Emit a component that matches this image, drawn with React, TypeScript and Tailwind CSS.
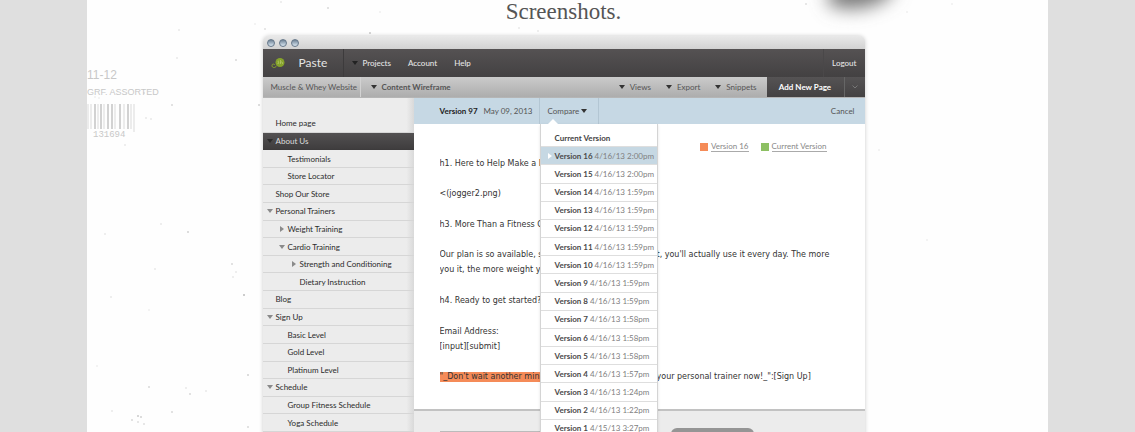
import clsx from "clsx";
import { ReactNode } from "react";

type Caret = "down" | "right";

type NavPage = {
  name: string;
  level: 0 | 1 | 2;
  caret?: Caret;
  active?: boolean;
};

const pages: NavPage[] = [
  { name: "Home page", level: 0 },
  { name: "About Us", level: 0, caret: "down", active: true },
  { name: "Testimonials", level: 1 },
  { name: "Store Locator", level: 1 },
  { name: "Shop Our Store", level: 0 },
  { name: "Personal Trainers", level: 0, caret: "down" },
  { name: "Weight Training", level: 1, caret: "right" },
  { name: "Cardio Training", level: 1, caret: "down" },
  { name: "Strength and Conditioning", level: 2, caret: "right" },
  { name: "Dietary Instruction", level: 2 },
  { name: "Blog", level: 0 },
  { name: "Sign Up", level: 0, caret: "down" },
  { name: "Basic Level", level: 1 },
  { name: "Gold Level", level: 1 },
  { name: "Platinum Level", level: 1 },
  { name: "Schedule", level: 0, caret: "down" },
  { name: "Group Fitness Schedule", level: 1 },
  { name: "Yoga Schedule", level: 1 },
];

const versions = [
  { id: 16, date: "4/16/13 2:00pm" },
  { id: 15, date: "4/16/13 2:00pm" },
  { id: 14, date: "4/16/13 1:59pm" },
  { id: 13, date: "4/16/13 1:59pm" },
  { id: 12, date: "4/16/13 1:59pm" },
  { id: 11, date: "4/16/13 1:59pm" },
  { id: 10, date: "4/16/13 1:59pm" },
  { id: 9, date: "4/16/13 1:59pm" },
  { id: 8, date: "4/16/13 1:59pm" },
  { id: 7, date: "4/16/13 1:58pm" },
  { id: 6, date: "4/16/13 1:58pm" },
  { id: 5, date: "4/16/13 1:58pm" },
  { id: 4, date: "4/16/13 1:57pm" },
  { id: 3, date: "4/16/13 1:24pm" },
  { id: 2, date: "4/16/13 1:22pm" },
  { id: 1, date: "4/15/13 3:27pm" },
];

// each line is split where the version menu hangs over it
const lines: { start: string; end?: string; changed?: boolean }[] = [
  { start: "h1. Here to Help Make a D" },
  { start: "" },
  { start: "<(jogger2.png)" },
  { start: "" },
  { start: "h3. More Than a Fitness C" },
  { start: "" },
  {
    start: "Our plan is so available, s",
    end: "t, you'll actually use it every day. The more",
  },
  { start: "you it, the more weight yo" },
  { start: "" },
  { start: "h4. Ready to get started?" },
  { start: "" },
  { start: "Email Address:" },
  { start: "[input][submit]" },
  { start: "" },
  {
    start: '"_Don\'t wait another minute',
    end: 'your personal trainer now!_":[Sign Up]',
    changed: true,
  },
];

// x, y, opacity
const specks: [number, number, number][] = [
  [194, 2, 0.3], [241, 8, 0.5], [293, 12, 0.2], [178, 29, 0.4], [283, 33, 0.7],
  [168, 24, 0.2], [92, 30, 0.3], [149, 60, 0.5], [90, 58, 0.3], [57, 93, 0.4],
  [85, 105, 0.5], [8, 97, 0.2], [12, 98, 0.2], [39, 94, 0.2], [172, 105, 0.6],
  [177, 135, 0.4], [38, 145, 0.3], [59, 118, 0.3], [64, 119, 0.3], [101, 232, 0.6],
  [74, 224, 0.3], [68, 269, 0.3], [145, 264, 0.5], [149, 272, 0.3], [146, 277, 0.3],
  [157, 295, 0.9], [24, 297, 0.3], [62, 310, 0.2], [161, 375, 0.6], [62, 387, 0.5],
  [99, 388, 0.3], [103, 394, 0.5], [119, 391, 0.3], [85, 412, 0.5], [51, 416, 0.7],
  [54, 417, 0.6], [45, 420, 0.5], [57, 424, 0.4], [51, 422, 0.4], [161, 427, 0.5],
  [25, 411, 0.3], [10, 366, 0.2], [18, 234, 0.3], [820, 12, 0.2], [719, 4, 0.4],
  [865, 4, 0.2], [792, 150, 0.2], [840, 240, 0.2], [451, 31, 0.3], [432, 28, 0.3],
];

function Triangle({ caret, className }: { caret: Caret; className?: string }) {
  return (
    <svg viewBox="0 0 6 6" className={clsx("size-1.5 shrink-0", className)}>
      <path
        d={caret === "down" ? "M0 1h6L3 5z" : "M1 0v6l4-3z"}
        fill="currentColor"
      />
    </svg>
  );
}

function Logo() {
  return (
    <svg viewBox="0 0 28 22" className="h-[11px] w-3.5">
      <circle cx="18" cy="9" r="9" fill="#86a32b" />
      <path
        d="M11 16C8 21 2 20 2 15C2 12 5 11 7 13"
        fill="none"
        stroke="#86a32b"
        strokeWidth="2"
        strokeLinecap="round"
      />
      <path
        d="M16 6c-3 0-2 3-1 3c2 0 1 3-2 2M19 4v8M19 9c2-2 4-1 4 1v2"
        fill="none"
        stroke="#c9d68a"
        strokeWidth="1"
      />
    </svg>
  );
}

function Backdrop() {
  return (
    <svg
      viewBox="0 0 961 432"
      className="absolute top-0 left-0 h-[432px] w-[961px]"
      aria-hidden
    >
      <defs>
        <filter id="soft" x="-50%" y="-300%" width="200%" height="700%">
          <feGaussianBlur stdDeviation="9" />
        </filter>
      </defs>
      <ellipse
        cx="773"
        cy="-7"
        rx="34"
        ry="15"
        fill="#777"
        filter="url(#soft)"
        transform="rotate(-10 773 -7)"
      />
      {specks.map(([x, y, opacity]) => (
        <circle key={`${x}-${y}`} cx={x} cy={y} r=".7" fill="#666" opacity={opacity} />
      ))}
      <g fill="#c8c8c8" fontFamily="Liberation Sans, sans-serif">
        <text x="0" y="79" fontSize="12">
          11-12
        </text>
        <text x="0" y="95" fontSize="9">
          GRF. ASSORTED
        </text>
        <text x="6" y="137" fontSize="9" fontFamily="Liberation Mono, monospace">
          131694
        </text>
      </g>
      <path
        d="M1 104v25M4 104v25M11 104v25M17 104v25M28 104v25M37 104v25M44 104v25M47 104v28"
        stroke="#dadada"
      />
      <path
        d="M8 104v25M14 104v25M21 104v25M25 104v25M33 104v25M41 104v25"
        stroke="#d2d2d2"
        strokeWidth="2"
      />
    </svg>
  );
}

function ToolbarButton({ children }: { children: ReactNode }) {
  return (
    <button className="flex items-center gap-[5px]">
      <Triangle caret="down" className="text-[#333]" />
      {children}
    </button>
  );
}

function Header() {
  return (
    <header className="flex h-7 items-center bg-linear-to-b from-[#555253] to-[#434142] pl-2 text-[8px] font-medium text-[#e4e4e4]">
      <Logo />
      <span className="w-[58px] pl-3.5 text-[12px] font-normal">Paste</span>
      <nav className="flex h-full items-center gap-[17px] border-l border-[#3d3b3c] pl-2">
        <button className="flex items-center gap-[5px]">
          <Triangle caret="down" className="text-[#222]" />
          Projects
        </button>
        <a href="#account">Account</a>
        <a href="#help">Help</a>
      </nav>
      <a
        href="#logout"
        className="ml-auto flex h-full items-center border-l border-[#4a4849] px-2"
      >
        Logout
      </a>
    </header>
  );
}

function Toolbar() {
  return (
    <div className="flex h-[21px] items-stretch border-b border-[#b5b5b5] bg-linear-to-b from-[#cbcbcb] to-[#adadad] text-[8px] text-[#555]">
      <a
        href="#project"
        className="flex w-[98px] items-center border-r border-[#d2d2d2] pl-2 whitespace-nowrap"
      >
        Muscle &amp; Whey Website
      </a>
      <div className="flex items-center pl-2.5 font-bold">
        <ToolbarButton>Content Wireframe</ToolbarButton>
      </div>
      <div className="ml-auto flex items-center gap-[15px] pr-2.5">
        <ToolbarButton>Views</ToolbarButton>
        <ToolbarButton>Export</ToolbarButton>
        <ToolbarButton>Snippets</ToolbarButton>
      </div>
      <button className="w-[77px] bg-linear-to-b from-[#555354] to-[#444243] font-bold text-white">
        Add New Page
      </button>
      <button
        aria-label="More page types"
        className="flex w-[21px] items-center justify-center border-l border-[#666] bg-linear-to-b from-[#555354] to-[#444243]"
      >
        <svg viewBox="0 0 12 8" className="h-1 w-1.5" fill="none" stroke="#777">
          <path d="M1 1l5 5 5-5" strokeWidth="2" />
        </svg>
      </button>
    </div>
  );
}

function Sidebar() {
  return (
    <nav className="w-[151px] shrink-0 bg-[#ececec] bg-linear-to-r from-transparent from-95% to-[#d9d9d9] pt-[17px] text-[8px] text-[#2b2b2b]">
      <ul className="grid h-[317px] auto-rows-fr">
        {pages.map(({ name, level, caret, active }) => (
          <li
            key={name}
            className={clsx(
              "flex border-b",
              active
                ? "border-[#3d3b3c] bg-linear-to-b from-[#535152] to-[#3f3d3e] text-[#ddd]"
                : "border-[#d6d6d6]",
            )}
          >
            <a
              href="#page"
              className={clsx(
                "flex items-center",
                level === 0 && "pl-1",
                level === 1 && "pl-4",
                level === 2 && "pl-7",
              )}
            >
              <span className="w-[9px]">
                {caret && (
                  <Triangle
                    caret={caret}
                    className={active ? "text-[#2a2a2a]" : "text-[#8a8a8a]"}
                  />
                )}
              </span>
              {name}
            </a>
          </li>
        ))}
      </ul>
    </nav>
  );
}

function VersionMenu() {
  return (
    <div className="absolute top-full left-0 z-10 w-[118px] border-x border-[#d4d4d4] bg-white pt-[5px] text-[8px] shadow-sm">
      <svg viewBox="0 0 10 5" className="absolute -top-[5px] left-[7px] h-[5px] w-2.5">
        <path d="M0 5 5 0l5 5z" fill="#fff" />
      </svg>
      <ul className="grid h-[309px] auto-rows-fr">
        <li className="flex items-center border-b border-[#dedede] pl-3.5 font-bold text-[#444]">
          Current Version
        </li>
        {versions.map(({ id, date }) => (
          <li
            key={id}
            className={clsx(
              "flex items-center border-b border-[#dedede]",
              id === 16 && "bg-[#c6d8e3]",
            )}
          >
            <span className="w-3.5 pl-1.5">
              {id === 16 && <Triangle caret="right" className="text-white" />}
            </span>
            <button className="flex items-center gap-0.5 whitespace-nowrap text-[#808080]">
              <span className="font-bold text-[#4a4a4a]">Version {id}</span>
              {date}
            </button>
          </li>
        ))}
      </ul>
    </div>
  );
}

function VersionBar() {
  return (
    <div className="flex h-[26px] items-stretch bg-[#c6d8e4] text-[8px] text-[#555]">
      <div className="flex w-[125px] items-center gap-1.5 pl-[26px]">
        <b className="text-[#222]">Version 97</b>
        May 09, 2013
      </div>
      <div className="relative flex w-[60px] items-center border-x border-[#b3c6d3] pl-2">
        <button className="flex items-center gap-0.5">
          Compare
          <Triangle caret="down" className="text-[#333]" />
        </button>
        <VersionMenu />
      </div>
      <button className="ml-auto pr-2.5">Cancel</button>
    </div>
  );
}

function Legend({ className, children }: { className: string; children: ReactNode }) {
  return (
    <div className="flex items-center gap-[3px]">
      <span className={clsx("size-2", className)} />
      <a href="#version" className="border-b border-[#aaa] leading-[9px]">
        {children}
      </a>
    </div>
  );
}

function Document() {
  return (
    <section className="relative h-[287px] border-b-2 border-[#c2c2c2] bg-white px-[26px] pt-8 text-[8px] text-[#333]">
      <div className="absolute top-[18px] right-[38px] flex gap-3 text-[#888]">
        <Legend className="bg-[#f58b58]">Version 16</Legend>
        <Legend className="bg-[#8dc063]">Current Version</Legend>
      </div>
      <div className="grid h-[229px] auto-rows-fr font-['DejaVu_Sans',sans-serif]">
        {lines.map(({ start, end, changed }, index) => (
          <p key={index} className="flex items-center whitespace-nowrap">
            <span
              className={clsx(
                "w-[217px] overflow-hidden",
                changed && "bg-[#f58b58] leading-[10px]",
              )}
            >
              {start}
            </span>
            {end}
          </p>
        ))}
      </div>
    </section>
  );
}

export default function App() {
  return (
    <div className="h-screen overflow-hidden bg-[#dfdfdf] font-['Lato','Noto_Sans',sans-serif]">
      <div className="relative mx-auto h-full max-w-[961px] overflow-hidden bg-[#fefefe]">
        <Backdrop />
        <div className="relative pr-2">
          <h2 className="h-9 text-center font-['Liberation_Serif',serif] text-[23px] leading-6 text-[#555]">
            Screenshots.
          </h2>
          <main className="mx-auto max-w-[602px] rounded-t-md bg-[#ececec] shadow-[0_0_4px_rgba(0,0,0,0.2)]">
            <div className="flex h-[13px] items-center gap-1 rounded-t-md bg-linear-to-b from-[#e9e9e9] to-[#d2d2d2] pl-1">
              {["Close", "Minimize", "Zoom"].map((label) => (
                <button
                  key={label}
                  aria-label={label}
                  className="size-2 rounded-full border border-[#66788a] bg-linear-to-b from-[#6f8396] to-[#dbe8f2]"
                />
              ))}
            </div>
            <Header />
            <Toolbar />
            <div className="flex">
              <Sidebar />
              <div className="grow">
                <VersionBar />
                <Document />
                <div className="flex items-start pt-[17px] pl-[26px]">
                  <div className="mt-[3px] mr-[129px] h-2 w-[102px] bg-[#bbb]" />
                  <div className="h-3 w-[83px] rounded-md bg-[#959595]" />
                </div>
              </div>
            </div>
          </main>
        </div>
      </div>
    </div>
  );
}
